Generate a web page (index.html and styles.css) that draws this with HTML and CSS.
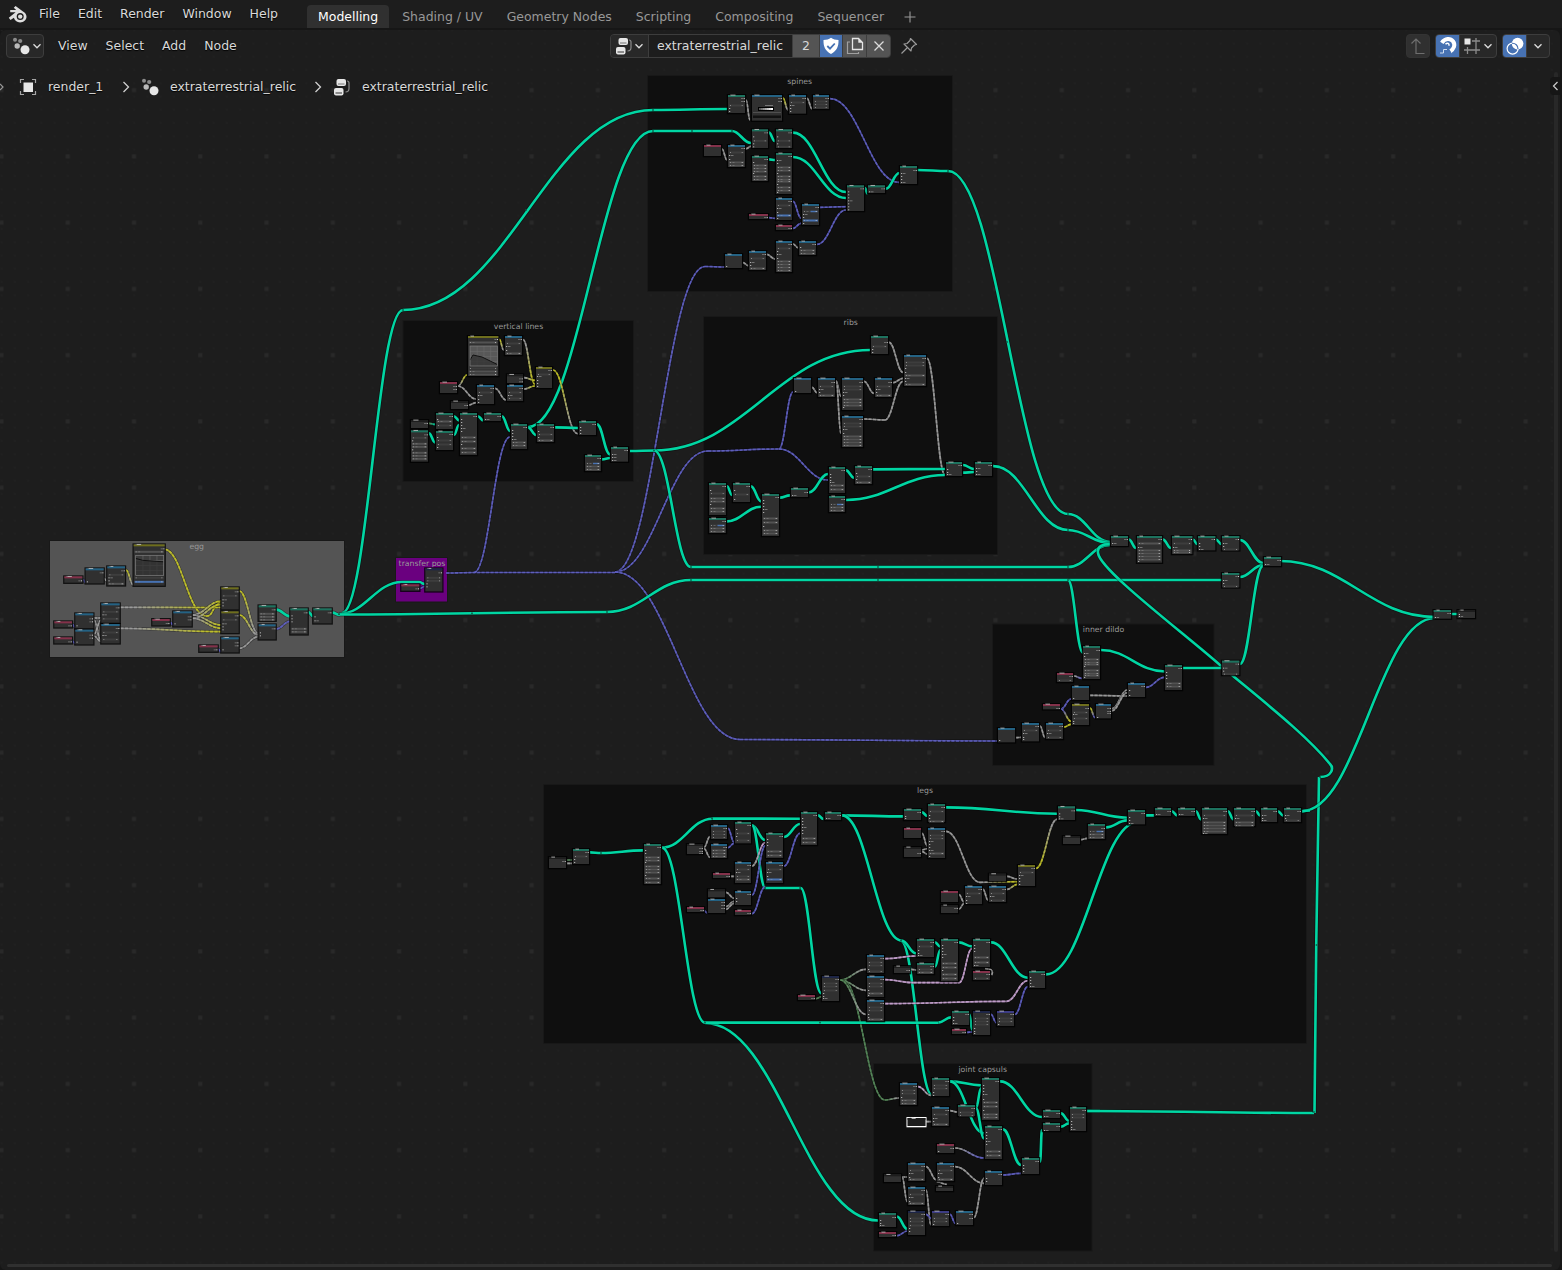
FILE: index.html
```html
<!DOCTYPE html>
<html lang="en">
<head>
<meta charset="utf-8">
<title>Blender</title>
<link rel="stylesheet" href="styles.css">
</head>
<body>
<svg class="sprites" aria-hidden="true">
  <symbol id="i-chevron" viewBox="0 0 10 10"><path d="M1.500 3.200 5 6.800 8.500 3.200" fill="none" stroke="#dcdcdc" stroke-width="1.300"/></symbol>
  <symbol id="i-dots" viewBox="0 0 18 18"><circle cx="3" cy="2.800" r="2" fill="#8c8c8c"/><circle cx="8.200" cy="4" r="2.100" fill="#8c8c8c"/><circle cx="5.200" cy="9" r="2.700" fill="#b9b9b9"/><circle cx="13" cy="12.800" r="4.500" fill="#e6e6e6"/></symbol>
  <symbol id="i-tree" viewBox="0 0 18 18"><rect x="3.500" y="1" width="9.500" height="7" rx="2" fill="#e6e6e6"/><path d="M5 6h6.500" stroke="#777" stroke-width="1"/><rect x="1" y="10" width="9.500" height="7.500" rx="2" fill="#e6e6e6"/><path d="M2.500 15H9" stroke="#333" stroke-width="1"/><path d="M14 3c1.500 0 2 .5 2 2v5.500c0 2.500-1 3.500-3.500 3.500" fill="none" stroke="#8c8c8c" stroke-width="1.200"/></symbol>
</svg>

<header class="topbar">
  <svg class="logo" viewBox="0 0 20 18"><path d="M.8 12.800 7.600 7.300H2.200V4.900h6L5.800 2.700 7.600.900l7.400 5.700c2.200 1.300 3.500 3.100 3.500 5.200 0 3.200-2.900 5.600-6.400 5.600-3.200 0-5.700-1.900-6.200-4.600L2.500 15z" fill="#dedede"/><circle cx="12.200" cy="11.600" r="3.500" fill="#1d1d1d"/><circle cx="12.200" cy="11.600" r="2.200" fill="#dedede"/></svg>
  <nav class="menus"><span>File</span><span>Edit</span><span>Render</span><span>Window</span><span>Help</span></nav>
  <nav class="tabs"><span class="tab active">Modelling</span><span class="tab">Shading / UV</span><span class="tab">Geometry Nodes</span><span class="tab">Scripting</span><span class="tab">Compositing</span><span class="tab">Sequencer</span><svg class="plus" viewBox="0 0 12 12"><path d="M6 .5v11M.5 6h11" stroke="#999" stroke-width="1.100"/></svg></nav>
</header>

<main class="editor">
  <svg class="canvas" id="canvas" viewBox="0 30 1562 1240">
    <defs>
      <pattern id="minor" x="-4.900" y="-2.800" width="13.250" height="13.250" patternUnits="userSpaceOnUse"><rect x="5.600" y="5.600" width="2" height="2" fill="#202020"/></pattern>
      <pattern id="major" x="-31.500" y="-9.100" width="66.270" height="66.250" patternUnits="userSpaceOnUse"><rect x="31" y="31" width="4" height="4" fill="#292929"/></pattern>
    </defs>
    <rect y="30" width="1562" height="1240" fill="url(#minor)"/>
    <rect y="62" width="1562" height="1208" fill="url(#major)"/>
    <g id="frames"></g><g id="links"></g><g id="nodes"></g>
  </svg>

  <div class="toolbar">
    <div class="left">
      <button class="box editor-type"><svg width="18" height="18"><use href="#i-dots"/></svg><svg width="10" height="10"><use href="#i-chevron"/></svg></button>
      <nav class="menus node-menus"><span>View</span><span>Select</span><span>Add</span><span>Node</span></nav>
    </div>
    <div class="datablock">
      <button class="cell browse"><svg width="18" height="18"><use href="#i-tree"/></svg><svg width="10" height="10"><use href="#i-chevron"/></svg></button>
      <span class="cell name">extraterrestrial_relic</span>
      <span class="cell grey users">2</span>
      <span class="cell blue"><svg width="18" height="18" viewBox="0 0 18 18"><path d="M9 .8c2.200 1.700 4.500 2.200 7.500 2.200.2 6.500-1.500 10.500-7.500 14C3 13.500 1.300 9.500 1.500 3 4.500 3 6.800 2.500 9 .8z" fill="#fff"/><path d="m5.300 9 2.700 2.700 4.800-5.200" fill="none" stroke="#4772b3" stroke-width="1.800"/></svg></span>
      <span class="cell grey"><svg width="18" height="18" viewBox="0 0 18 18"><path d="M6.500 1.500h6l4 4v7h-10z" fill="none" stroke="#e6e6e6" stroke-width="1.300"/><path d="M12.300 1.500v4.200h4.200z" fill="#e6e6e6"/><path d="M4 5H1.500v11.500h11V15" fill="none" stroke="#a0a0a0" stroke-width="1.200"/></svg></span>
      <span class="cell grey"><svg width="18" height="18" viewBox="0 0 18 18"><path d="m4.500 4.500 9 9m0-9-9 9" stroke="#dcdcdc" stroke-width="1.300"/></svg></span>
    </div>
    <svg class="pin" viewBox="0 0 18 18"><path d="M10.500 1.500 16.500 7.500 14.500 8 11.500 11 11 14 4 7 7 6.500 10 3.500zM7 11 1.500 16.500" fill="none" stroke="#9a9a9a" stroke-width="1.200" stroke-linejoin="round"/></svg>
    <div class="right">
      <span class="box parent"><svg width="18" height="18" viewBox="0 0 18 18"><path d="M2.500 6.500 7 2l4.500 4.500M7 2v14.500h8.500" fill="none" stroke="#6e6e6e" stroke-width="1.200"/></svg></span>
      <div class="group snap">
        <span class="cell blue"><svg width="20" height="20" viewBox="0 0 20 20"><path d="M3.800 6.800C7 1.800 12.500 2 15 5.200c2.800 3.800.8 7.800-3 10.300" fill="none" stroke="#fff" stroke-width="4"/><path d="m7.500 8.300c2-2 4-.8 3.400 1.500" fill="none" stroke="#fff" stroke-width="1.500"/><path d="m2.600 9 3.400 1.800M10.200 13l2.600 4" stroke="#4772b3" stroke-width="1.400"/><path d="M2 17h3.500v-3.500H9" fill="none" stroke="#cfdcf0" stroke-width="1"/></svg></span>
        <span class="cell target"><svg width="18" height="18" viewBox="0 0 18 18"><path d="M13 1v16M1 13h16M4.500 10v7M9 4h8" stroke="#8c8c8c" stroke-width="1.300"/><rect x="1.500" y="1.500" width="6" height="6" fill="#e6e6e6"/></svg><svg width="10" height="10"><use href="#i-chevron"/></svg></span>
      </div>
      <div class="group overlay">
        <span class="cell blue"><svg width="20" height="20" viewBox="0 0 20 20"><circle cx="12.600" cy="7.600" r="5.800" fill="#fff"/><circle cx="7.600" cy="12.600" r="5.500" fill="none" stroke="#fff" stroke-width="1.200"/><path d="M7 7.300a5.500 5.500 0 0 1 6 5.700" fill="none" stroke="#4772b3" stroke-width="1.200"/></svg></span>
        <span class="cell drop"><svg width="10" height="10"><use href="#i-chevron"/></svg></span>
      </div>
    </div>
  </div>

  <div class="crumbs">
    <svg class="edge" viewBox="0 0 6 18"><path d="m0 6 3 3-3 3" fill="none" stroke="#999" stroke-width="1.200"/></svg>
    <svg class="c-obj" width="18" height="18" viewBox="0 0 18 18"><rect x="4.500" y="4.500" width="9.500" height="9.500" fill="#e6e6e6"/><path d="M1.500 5V1.500H5M13 1.500h3.500V5M16.500 13v3.500H13M5 16.500H1.500V13" fill="none" stroke="#a5a5a5" stroke-width="1.200"/></svg>
    <span class="c1">render_1</span>
    <svg class="sep" viewBox="0 0 8 12"><path d="m1.500 1 5 5-5 5" fill="none" stroke="#d0d0d0" stroke-width="1.300"/></svg>
    <svg class="i2" width="18" height="18"><use href="#i-dots"/></svg>
    <span class="c2">extraterrestrial_relic</span>
    <svg class="sep" viewBox="0 0 8 12"><path d="m1.500 1 5 5-5 5" fill="none" stroke="#d0d0d0" stroke-width="1.300"/></svg>
    <svg class="i3" width="18" height="18"><use href="#i-tree"/></svg>
    <span class="c3">extraterrestrial_relic</span>
  </div>
  <div class="vscroll"></div>
  <div class="side-handle"><svg viewBox="0 0 8 12"><path d="M6.500 2 2.500 6l4 4" fill="none" stroke="#ccc" stroke-width="1.200"/></svg></div>
  <div class="hscroll"></div>
</main>
<script src="graph.js"></script>
</body>
</html>
```
FILE: styles.css
```css
* { box-sizing: border-box; }
body {
  margin: 0;
  width: 1562px;
  height: 1270px;
  overflow: hidden;
  display: flex;
  flex-direction: column;
  background: #161616;
  color: #d9d9d9;
  font: 12.47px/16px "DejaVu Sans", sans-serif;
}
svg { display: block; flex: none; }
.sprites { position: absolute; width: 0; height: 0; }
button { font: inherit; color: inherit; padding: 0; margin: 0; }

.topbar { display: flex; height: 28px; margin-bottom: 2px; background: #1d1d1d; }
.logo { width: 20px; height: 18px; margin: 5px 0 0 8px; }
.menus { display: flex; gap: 18px; white-space: nowrap; text-shadow: 0 1px 1px #000; }
.topbar .menus { margin: 6px 0 0 11px; width: 268px; }
.tabs { display: flex; gap: 2px; padding-top: 5px; white-space: nowrap; }
.tab { height: 23px; padding: 4px 11px; border-radius: 4px 4px 0 0; color: #989898; }
.tab.active { background: #303030; color: #fff; }
.plus { width: 12px; height: 12px; margin: 6px 0 0 7px; }

.editor { position: relative; flex: 1; background: #1d1d1d; border-radius: 6px; margin-right: 2px; }
.canvas { position: absolute; left: 0; top: 0; width: 1562px; height: 1240px; }
.canvas text { font: 7.75px "DejaVu Sans", sans-serif; fill: #989898; text-anchor: middle; }

.toolbar { position: relative; display: flex; align-items: center; height: 24px; margin-top: 4px; }
.left { display: flex; align-items: center; width: 610px; padding-left: 6px; }
.box, .datablock, .group { display: flex; align-items: center; height: 24px; border: 1px solid #3d3d3d; border-radius: 4px; background: #282828; overflow: hidden; }
.editor-type { width: 38px; padding-left: 5px; gap: 2px; }
.node-menus { margin-left: 14px; }
.cell { display: flex; align-items: center; justify-content: center; flex: none; width: 24px; height: 100%; border-left: 1px solid #3d3d3d; }
.cell:first-child { border-left: 0; }
.datablock { width: 281px; }
.browse { width: 37px; gap: 1px; background: #282828; border: 0; }
.name { width: 144px; background: #1d1d1d; justify-content: flex-start; padding-left: 8px; }
.users { width: 27px; }
.grey { background: #545454; }
.blue { background: #4772b3; width: 23px; }
.pin { width: 18px; height: 18px; margin-left: 9px; }
.right { display: flex; margin-left: auto; margin-right: 10px; }
.parent { width: 24px; justify-content: center; background: #303030; border-color: #333; margin-right: 5px; }
.snap { width: 62px; margin-right: 5px; }
.target { width: 37px; gap: 2px; }
.overlay { width: 48px; }
.drop { width: 23px; }

.crumbs { position: relative; display: flex; align-items: center; height: 18px; margin-top: 20px; text-shadow: 0 1px 1px #000; white-space: nowrap; }
.edge { width: 6px; height: 18px; }
.c-obj { margin-left: 13px; }
.c1 { margin-left: 11px; width: 74px; }
.sep { width: 8px; height: 12px; }
.i2 { margin-left: 11px; }
.c2 { margin-left: 11px; width: 144px; }
.i3 { margin-left: 11px; }
.c3 { margin-left: 11px; }

.side-handle { position: absolute; right: 0; top: 47px; width: 10px; height: 18px; background: #161616; border-radius: 4px 0 0 4px; }
.side-handle svg { width: 8px; height: 12px; margin: 3px 0 0 1px; }
.vscroll { position: absolute; right: 2px; top: 42px; width: 4px; height: 1180px; border-radius: 2px; background: #282828; }
.hscroll { position: absolute; left: 7px; bottom: 3px; width: 1545px; height: 3px; border-radius: 2px; background: #303030; }
```
FILE: graph.js
```js
const NS = 'http://www.w3.org/2000/svg';
const HEAD = { g: '#1d725e', b: '#246283', r: '#83314a', y: '#6e6e1d', n: '#1d1d1d', v: '#1d2546', p: '#3c3c83' };
const WIRE = { g: '#00d6a3', v: '#6363c7', s: '#a1a1a1', y: '#c7c729', k: '#cca6d6', e: '#598c5c' };
const layer = id => document.getElementById(id);

function add(parent, tag, attrs, text) {
  const el = document.createElementNS(NS, tag);
  for (const k in attrs) el.setAttribute(k, attrs[k]);
  if (text) el.textContent = text;
  parent.appendChild(el);
  return el;
}

// title, x1, y1, x2, y2, fill, label centre, label baseline
[
  ['spines', 648, 76, 952, 291, '#0f0f0f', 799.7, 84],
  ['vertical lines', 403.500, 321, 633, 481, '#0f0f0f', 518.500, 328.700],
  ['ribs', 704, 317, 997, 554, '#0f0f0f', 850.700, 325],
  ['egg', 50, 541, 344, 657, '#545454', 196.700, 549],
  ['transfer pos', 396, 558, 447, 601.500, '#6a007f', 422, 566],
  ['inner dildo', 993, 624.500, 1213.500, 765, '#0f0f0f', 1103.500, 632],
  ['legs', 544, 785, 1306, 1043, '#0f0f0f', 925, 793],
  ['joint capsuls', 874, 1064, 1091.500, 1250.500, '#0f0f0f', 982.700, 1072]
].forEach(([t, x, y, x2, y2, fill, lx, ly]) => {
  add(layer('frames'), 'rect', { x: x - 1, y: y - 1, width: x2 - x + 2, height: y2 - y + 2, fill: '#181818', rx: 1 });
  add(layer('frames'), 'rect', { x, y, width: x2 - x, height: y2 - y, fill });
  add(layer('frames'), 'text', { x: lx, y: ly }, t);
});

// Detail tokens: o output, i input, l input with label, f dim field, b value field, u active field, h half-active field
function node(ox, oy, row) {
  const [a, b, c, d, head, detail = ''] = row;
  const x = ox + a / 3, y = oy + b / 3, w = (c - a) / 3, h = (d - b) / 3;
  const g = add(layer('nodes'), 'g', {});
  const box = (bx, by, bw, bh, fill, o = 1) => add(g, 'rect', { x: bx, y: by, width: bw, height: bh, fill, opacity: o });
  box(x - 1.200, y - 1, w + 2.400, h + 2.300, '#000', .8);
  box(x, y, w, h, '#303030');
  box(x, y, w, 2, HEAD[head]);
  const t = (a * 7 + b) % 4;
  box(x + 3, y - .4, 3 + t * .5, 1, '#c8c8c8', .8);
  box(x + 2, y - .4, 1, 1, '#777');
  detail.split(' ').filter(Boolean).forEach(tok => {
    const k = tok[0], ty = y + Number(tok.slice(1));
    if (k === 'o') { box(x + w - 1.300, ty, 1, 1, '#d0d0d0'); box(x + w - 4, ty, 2.300, 1, '#6c6c6c'); }
    if (k === 'i' || k === 'l') box(x + 1.200, ty, 1, 1, '#d0d0d0');
    if (k === 'l') box(x + 3, ty, 2.500, 1, '#747474');
    if ('fbuh'.includes(k)) {
      box(x + 1, ty - .5, w - 2, 2, { f: '#3d3d3d', b: '#525252', u: '#4772b3', h: '#3a3a3a' }[k]);
      if (k === 'h') box(x + w / 2, ty - .2, w / 2 - 1.500, 1.400, '#4772b3');
      box(x + 2, ty, 1, 1, '#aaa', .7);
      if (k !== 'f') box(x + 4.500, ty, 2, 1, '#aaa', .35);
      box(x + w - 3.300, ty, 1, 1, '#c4c4c4', k === 'f' ? .6 : .9);
    }
    if (k === 'w') { g.firstChild.setAttribute('fill', '#fff'); g.firstChild.setAttribute('opacity', 1); box(x, y, w, h, '#1d1d1d'); box(x + 4, y, 4, 1, '#aaa'); }
    if (k === 'R') {
      box(x + 13, ty - 1, 8, 1, '#777'); box(x + 6, ty + 1, 16, 4, '#000');
      for (let n = 0; n < 7; n++) box(x + 7 + n * 2, ty + 2, 2, 2, `rgb(${90 + n * 27},${90 + n * 27},${90 + n * 27})`);
      box(x + 1, ty + 6, w - 2, 1, '#999', .3); box(x + 1, ty + 9.500, w - 2, 2.500, '#111');
    }
    if (k === 'C' || k === 'D') {
      const gx = x + 2, gw = w - 3, gh = 20;
      box(gx, ty, gw, gh, k === 'C' ? '#585858' : '#3d3d3d');
      for (let n = 1; n < 4; n++) { box(gx + n * gw / 4, ty, .6, gh, '#6a6a6a'); box(gx, ty + n * gh / 4, gw, .6, '#6a6a6a'); }
      const line = k === 'C' ? `M${gx} ${ty + 14} L${gx + 3} ${ty + 9} L${gx + 12} ${ty + 11} L${gx + gw} ${ty + 18.500}` : `M${gx} ${ty + 3} L${gx + 7} ${ty + 5} L${gx + gw} ${ty + 6.500}`;
      add(g, 'path', { d: `${line} V${ty + gh} H${gx} Z`, fill: '#303030', opacity: .75 });
      add(g, 'path', { d: line, fill: 'none', stroke: '#111', 'stroke-width': 1 });
      add(g, 'rect', { x: gx, y: ty, width: gw, height: gh, fill: 'none', stroke: '#808080', 'stroke-width': .7 });
    }
  });
}

let gradientCount = 0;
function wire(kind, x1, y1, x2, y2, d) {
  const from = WIRE[kind[0]], to = WIRE[kind[1] || kind[0]];
  let stroke = from;
  if (from !== to) {
    const id = 'wire' + gradientCount++;
    const lg = add(layer('links'), 'linearGradient', { id, gradientUnits: 'userSpaceOnUse', x1, y1, x2, y2 });
    add(lg, 'stop', { offset: .15, 'stop-color': from });
    add(lg, 'stop', { offset: .85, 'stop-color': to });
    stroke = `url(#${id})`;
  }
  const k = Math.max(Math.abs(x2 - x1) * .42, 1);
  const path = d || `M${x1} ${y1}C${x1 + k} ${y1} ${x2 - k} ${y2} ${x2} ${y2 + .01}`;
  const solid = kind[0] === 'g';
  const L = layer('links');
  add(L, 'path', { d: path, fill: 'none', stroke: '#000', 'stroke-width': solid ? 4.200 : 3, opacity: .35 });
  add(L, 'path', { d: path, fill: 'none', stroke, 'stroke-width': solid ? 2.600 : 1.700, opacity: solid ? 1 : .7 });
  if (!solid) add(L, 'path', { d: path, fill: 'none', stroke, 'stroke-width': 1.600, 'stroke-dasharray': '3 1.500', opacity: .8 });
}

// Links that run between frames
[
  ['v', 446, 573, 477, 572.500], ['v', 477, 572.500, 615, 572.500], ['v', 474, 572.500, 510, 437],
  ['v', 615, 572, 705, 266.500], ['v', 705, 266.500, 725, 267], ['v', 615, 572, 708, 451],
  ['v', 708, 451, 779, 449], ['v', 779, 449, 793, 392], ['v', 779, 449, 828, 480],
  ['v', 615, 572, 740, 739.500], ['v', 740, 739.500, 997, 741],
  ['e', 843, 980, 885, 1100], ['es', 885, 1100, 899, 1098],
  ['g', 342, 613, 403, 310], ['g', 403, 310, 653, 110], ['g', 653, 110, 727, 109],
  ['g', 528, 427, 653, 131], ['g', 653, 131, 732, 131], ['g', 732, 131, 751, 143],
  ['g', 630, 451, 656, 450.500], ['g', 654, 450.500, 870, 350], ['g', 654, 450.500, 691, 567],
  ['g', 691, 567, 1068, 567], ['g', 1068, 567, 1110, 545],
  ['g', 339, 614, 402, 582], ['g', 402, 582, 419, 582], ['g', 419, 582, 425, 584],
  ['g', 339, 614.500, 607, 612], ['g', 607, 612, 691, 580], ['g', 691, 580, 1222, 580], ['g', 1068, 580, 1083, 653],
  ['g', 917, 170, 948, 171], ['g', 948, 171, 1068, 514], ['g', 1068, 514, 1110, 542],
  ['g', 993, 466, 1068, 530], ['g', 1068, 530, 1110, 543],
  ['g', 0, 0, 0, 0, 'M1320 777C1332 777 1334 768 1330 764C1305 733 1255 695 1220 665C1180 630 1100 570 1098 553C1097 546 1103 544 1110 544'],
  ['g', 1087, 1111, 1314, 1113], ['g', 1315, 1113, 1320, 777, 'M1314.500 1113C1315 1050 1317 850 1319 777'],
  ['g', 1302, 811, 1435, 618], ['g', 1280, 561, 1435, 617], ['g', 1240, 540, 1263, 563],
  ['g', 1240, 577, 1263, 565], ['g', 1240, 664, 1263, 566], ['g', 1183, 668, 1222, 668],
  ['g', 1451, 614, 1458, 614], ['g', 1101, 650, 1165, 671.500],
  ['g', 705, 1023, 878, 1220.500], ['g', 901, 941, 932, 1095]
].forEach(l => wire(...l));

// Reroute points along the links
[[403, 310], [526, 210], [653, 110], [653, 131], [732, 131], [692, 131], [654, 450.500], [691, 567], [691, 580], [878, 567], [878, 580],
 [1068, 514], [1068, 530], [1068, 567], [1068, 580], [1007, 342], [948, 171], [607, 612], [472, 613.300], [339, 614.300], [1320, 777],
 [1316.500, 945], [1314, 1112], [705, 1022.600], [901, 940.600], [712, 818.600], [765, 888], [800, 888], [820, 1022.600], [601, 853]]
  .forEach(([x, y]) => add(layer('nodes'), 'rect', { x: x - .8, y: y - .8, width: 1.600, height: 1.600, fill: '#0b5c48' }));

// Each group: origin, nodes, links; inner coordinates are thirds of a pixel
const groups = [
  { o: [640, 70], n: [
    [264,75,315,129,'g','o3 o6 f10 i13 i16'], [336,75,426,152,'b','o3 o6 R11'], [447,75,498,131,'b','o3 f7 l10 i13 i16'],
    [519,75,567,117,'b','o3 f6 f9 f12'], [336,178,384,234,'g','o3 i7 f11 i14 i17'], [408,178,456,234,'g','o3 i7 f11 i14 f17'],
    [192,225,243,258,'r'], [264,225,315,291,'b','o3 f7 l10 i14 b17 b20'], [336,258,384,333,'g','o3 i6 b9 b12 b15 i17 b20 b23'],
    [408,249,456,372,'g','o3 l7 i10 b14 b17 i20 b23 b26 b28 i31 b34 b37 i39'], [408,384,456,450,'b','o3 f7 l10 i14 u17 i20'],
    [486,402,537,465,'b','o3 h7 l10 i13 u16 i19'], [327,432,384,447,'r','o3'], [408,465,456,480,'r','o3'],
    [408,513,456,606,'b','o3 f7 i10 l13 i17 b20 b23 b26 b29'], [477,513,528,555,'b','o3 i6 b9 b12'], [255,552,306,594,'b','i12'],
    [327,543,378,600,'b','o3 f7 l11 i14 b17'], [621,346,672,423,'g','o3 i6 i9 i12 l15 i18 i21 i24'], [684,346,735,369,'g','o3 l6'], [780,288,831,342,'g','o4 l7 i10 i13 l16'] ],
    l: [['s',318,90,330,150],['ys',429,84,444,120],['s',501,85,516,116],['v',570,86,777,337],['g',387,188,404,213],['s',246,237,261,270],['s',318,236,333,229],['g',387,268,405,270],['g',459,188,618,366],['g',459,261,618,384],['v',387,443,406,445],['v',459,394,483,444],['v',459,475,483,460],['v',540,412,618,410],['v',531,523,618,420],['s',309,578,325,587],['s',380,553,405,567],['s',459,522,474,533],['g',675,354,682,370],['g',738,356,778,309]] },
  { o: [395, 315], n: [
    [219,63,310,183,'y','o3 b6 C10 f32 b35 b38'], [330,63,381,120,'b','o3 f7 l10 i14 b17'], [135,201,186,234,'r','o4 o7'], [168,258,219,282,'n','o4'],
    [246,210,297,267,'b','o3 f7 l10 i14 i17'], [336,178,384,204,'n','o4 o7'], [336,210,384,258,'b','o3 f7 l10 f13'], [423,156,471,219,'y','o3 f7 l9 i13 i16 i19'],
    [48,315,99,339,'n','o3'], [48,346,99,440,'g','o4 f7 i10 b13 b16 i19 b22 b25 b28'], [123,294,174,342,'g','o3 i6 b8 f12'], [123,348,174,405,'g','o3 i6 f9 f13 i16'],
    [195,294,246,420,'g','o3 i6 i9 i12 l15 i18 b24 b28 i31 b35 b39'], [267,294,318,318,'g','o3 l6'], [348,327,396,402,'g','o3 i6 i9 i12 b18 b21 l15'], [426,327,477,381,'g','o3 i7 f10 i13 b16'],
    [552,318,603,360,'g','o3 i6 i9 i12'], [648,396,699,440,'g','o3 l7 l10 l13'], [570,420,618,468,'g','o3 h8 b11 b14'] ],
    l: [['ys',313,73,326,105],['sy',189,213,216,180],['s',189,213,243,252],['s',222,270,243,263],['s',300,220,333,255],['sy',384,74,420,208],['sy',387,188,420,196],['sy',387,222,420,213],['ys',474,165,548,356],['eg',102,325,120,328],['g',102,355,120,382],['g',177,304,192,316],['g',177,360,192,330],['g',249,304,265,316],['g',321,304,345,348],['g',399,337,423,360],['g',480,337,549,339],['g',606,328,645,418],['g',621,433,645,429]] },
  { o: [700, 315], n: [
    [513,63,564,117,'g','o6 f10 i13 i16'], [612,120,678,213,'b','o3 f7 f10 i13 i17 b20 l23 i26 b29'], [282,189,333,234,'b','i13'], [354,189,405,246,'b','o4 f8 l11 i14 b17'],
    [426,189,489,285,'b','o4 f8 f11 l14 i17 b21 b24 b27 i29'], [525,189,576,246,'b','o4 f8 l11 i14 b17'], [426,303,489,396,'b','o3 f7 f10 l13 i17 b20 b23 b26 b29'],
    [27,504,78,600,'g','o3 i7 f10 b15 b18 i21 b25 b28'], [99,504,150,561,'g','o3 i7 f11 i16'], [27,609,78,654,'g','o3 h7 b10 b13'], [186,537,237,663,'g','o3 i6 i9 i12 l15 i18 b24 b28 i32 b36 b39'],
    [273,519,324,546,'g','o4 l7'], [387,456,435,534,'g','o3 i7 i10 i13 b18 b22 l15'], [465,453,516,507,'g','o3 i7 f10 i13 b16'], [387,543,435,591,'g','o3 h8 b11 b14'], [738,441,786,483,'g','o3 i7 i10 l12'], [825,441,876,483,'g','o3 l6 i9 l12'] ],
    l: [['s',567,82,609,172],['s',336,217,351,233],['s',408,198,423,244],['s',408,198,423,355],['s',492,199,522,235],['s',579,203,609,190],['s',492,312,555,315],['s',555,315,609,199],['s',681,130,735,480],['g',81,514,96,540],['g',153,514,183,559],['g',81,619,183,575],['g',240,548,270,541],['g',327,532,384,477],['g',438,466,462,488],['g',519,463,735,462],['g',438,555,735,480],['g',789,450,822,462],['g',789,473,822,471],['g',879,453,900,456]] },
  { o: [40, 535], n: [
    [73,124,127,143,'r','o4'], [137,100,191,145,'b','i13 o4'], [202,94,255,151,'b','o4 f8 l11 i14 b17'], [281,28,374,152,'y','o4 b7 D11 f33 u37'],
    [43,259,96,277,'r','o4'], [106,235,160,280,'b','o5 o8 i12'], [106,284,160,328,'b','o5 o8 i12'], [43,307,96,325,'r','o4'], [184,205,239,263,'b','o4 f8 l11 f15'], [184,267,239,325,'b','o4 f8 l11 f15'],
    [337,252,389,271,'r','o4'], [400,229,455,274,'b','o5 o8 i12'], [544,157,596,223,'y','o4 f8 l12 i15 i18'], [544,229,596,294,'y','o4 f8 l12 i15 i18'], [478,331,533,350,'r','o4'], [544,307,596,352,'b','o5 o8 i12'],
    [656,211,707,257,'g','o4 b8 b11 b14'], [656,268,707,313,'b','o4 i8 i11'], [751,220,803,298,'g','o4 i7 i10 i13 b20 b23'], [820,220,875,265,'g','o4 i8 l12'],
    [1084,148,1138,167,'r','o4'], [1156,100,1207,169,'v','o4 f9 f12 i15 i18'] ],
    l: [['v',130,134,136,142],['s',192,130,200,138],['ys',258,105,280,150],['y',376,43,540,280,'M165.300 549.300C182 552 188 615 206 616C214 617 212 604 221 602'],['v',97,268,106,278],['v',97,318,106,325],['s',162,249,183,249],['s',162,255,183,318],['s',162,297,183,255],['s',162,303,183,320],['sy',241,217,543,217.500],['sy',241,280,543,290],['v',391,263,400,270],['sy',458,240,543,198],['sy',458,240,543,270],['sy',458,250,543,208],['sy',458,250,543,280],['ys',598,168,655,296],['ys',598,240,655,300],['s',598,340,655,305],['v',534,342,543,350],['g',709,224,750,244],['v',709,282,750,259],['g',805,231,820,244],['g',877,233,900,240],['v',1140,160,1155,154]] },
  { o: [985, 500], n: [
    [378,108,429,138,'g','o3 l7'], [456,108,531,188,'g','o3 b7 l11 b14 b17 b20 b23 i25'], [561,108,622,162,'g','o3 f7 l11 b14 b16'], [639,108,691,151,'g','o3 i7 i10 l13'], [711,108,763,151,'g','o3 l7 i10 f13'],
    [837,171,888,198,'g','o3 l7'], [711,219,763,262,'g','o3 l7 i10 f13'], [1346,330,1398,356,'g','o3 l7'], [1418,330,1470,354,'n','i4 l6'],
    [294,438,345,537,'g','o4 l7 i10 b13 b16 b18 i20 b24 b27 b29 i31'], [216,519,264,546,'r','o3 f7'], [540,495,591,570,'g','o3 i7 i10 i13 b18 b21'], [261,558,312,600,'b','i12'], [174,612,225,628,'r','o4'],
    [261,612,312,675,'y','o4 f8 l10 f14 i17 i19'], [333,612,378,655,'b','o4 o7 o9 i13'], [429,549,480,591,'b','o3 i7 i12'], [39,684,90,727,'b','i12'], [111,669,162,724,'b','o3 f7 l10 i14 i16'], [183,669,234,717,'b','o3 f7 l10 f14'], [711,482,763,525,'g','o3 l7 i10 f13'] ],
    l: [['g',432,119,453,144],['g',534,119,558,144],['g',624,119,637,132],['g',693,119,709,132],['sv',267,528,291,535],['s',315,586,427,588],['v',228,627,258,597],['vy',228,627,258,664],['s',93,713,108,712],['s',165,678,180,712],['y',237,681,258,673],['yv',315,624,330,653],['s',381,626,427,570],['s',381,632,427,578],['v',483,562,538,532]] },
  { o: [540, 780], n: [
    [27,231,78,264,'n','o4'], [99,207,147,252,'g','o3 f7 i10 i13'], [312,192,363,312,'g','o3 i6 i9 b13 b16 i18 b22 b25 b28 i31 b34 b38'],
    [441,192,489,222,'n','o4 o7 o9'], [513,135,561,177,'b','o3 f6 f9 f12'], [513,192,561,234,'b','o3 b6 b9 b12'], [585,126,633,190,'g','o3 i7 f11 i14 f18'], [678,159,729,234,'g','o3 i6 i9 i12 b18 b22'],
    [783,96,831,195,'g','o3 i6 i9 i12 l15 i18 i21 b26 b30'], [855,96,903,120,'g','o3 l6'], [585,246,633,309,'b','o3 f7 l10 f14 b17'], [678,246,729,309,'b','o3 f7 l10 i14 u17'], [519,279,570,294,'r','o3'],
    [504,328,555,352,'n'], [504,357,555,399,'b','o3 o6 o9'], [441,381,492,396,'r','o3'], [585,333,633,375,'b','o3 i7 i10'], [585,390,633,405,'r','o3'], [774,645,825,660,'r','o3'], [846,588,897,663,'v','o3 f7 f10 f14 i17 i20 l22'] ],
    l: [['e',81,240,96,240],['s',81,250,96,250],['g',150,217,183,219],['g',183,219,309,211],['g',366,203,517,116],['g',517,116,780,116],['g',366,203,495,728],['g',495,728,1195,728],
      ['s',492,202,510,170],['s',492,206,510,232],['v',564,145,582,186],['v',564,203,582,190],['g',636,136,675,180],['g',636,136,676,324],['g',676,324,782,324],['g',782,324,844,640],['s',573,289,584,289],['sk',636,258,676,188],['v',636,345,676,197],['v',636,401,676,320],['s',558,337,582,355],['s',558,380,582,364],['s',558,388,582,370],['v',492,392,503,400],['g',732,171,780,132],['v',732,258,780,160],['g',834,106,850,117],['g',906,106,1090,109],['g',906,106,1085,482],['e',828,656,844,650],
      ['es',900,600,978,568],['es',900,600,978,631],['es',900,600,978,703],['g',1085,482,1128,520]] },
  { o: [860, 780], n: [
    [132,87,183,120,'g','o3 i7 i9'], [204,72,255,126,'g','o3 f7 i11 i14 b17'], [132,144,183,174,'r'], [132,201,183,231,'n','o6'], [204,144,255,234,'b','o3 f7 f10 l13 i16 i19 l22 b25 i28'],
    [243,333,294,366,'r'], [243,375,294,399,'n','o3'], [315,318,366,372,'b','o3 f7 l10 i14 i17'], [387,318,438,366,'b','o3 f7 l10 f14'], [387,281,438,303,'n'], [474,255,525,318,'y','o3 f7 l10 i13 i16 i19'],
    [594,79,645,120,'g','o4 i7 i10 l12'], [684,132,735,177,'g','o4 h7 b10 b13'], [609,168,660,192,'n'], [804,90,855,133,'g','o3 i7 i10 l13'], [885,84,933,108,'g','o3 l6'], [954,84,1005,108,'g','o3 l6'],
    [1026,84,1101,162,'g','o3 f7 l10 b14 b17 b20 b23 l25'], [1122,84,1185,138,'g','o3 f7 l10 b14 b17'], [1203,84,1251,126,'g','o3 l7 i10 l12'], [1272,84,1323,126,'g','o3 l7 i10 f12'],
    [21,525,72,579,'b','o3 f7 f10 i14 f16'], [21,588,72,651,'b','o3 f7 f10 i14 b17 i19'], [21,660,72,723,'b','o3 f7 f10 i14 i17 b19'], [102,558,150,579,'n','o4'], [171,477,222,531,'g','o3 f7 i11 i14 l16'], [171,549,222,582,'g','o3 f6 b9'],
    [243,477,294,603,'g','o3 i6 i9 i12 l15 i18 b24 b28 i31 b35 b39'], [339,477,390,561,'g','o3 i6 i9 i12 b18 b23 l26'], [339,573,390,600,'r','o3 f7'], [507,573,555,624,'g','o3 i6 i9 i12 l15'],
    [276,693,327,735,'g','o3 i6 i9 l12'], [276,747,318,762,'r','o3'], [339,693,390,765,'v','o3 f7 f10 f13 i17 i20 i22'], [411,693,462,738,'p','o3 f7 f10 i13'] ],
    l: [['g',186,97,202,108],['g',258,82,591,101],['s',186,160,202,198],['s',186,210,202,206],['s',186,215,202,222],['s',258,154,360,307],['sy',360,307,472,305],['s',297,344,312,366],['s',297,387,312,371],['s',369,328,384,360],['sy',441,328,472,313],['s',441,289,472,297],['ys',528,265,591,118],['g',648,90,801,113],['s',663,179,682,175],['g',738,142,801,121],['g',858,106,884,106],['g',558,583,835,125],['g',936,94,951,106],['g',1008,94,1023,118],['g',1104,94,1120,118],['g',1188,94,1201,107],['g',1254,94,1270,107],['g',1326,94,1350,91],
      ['k',75,536,170,528],['s',153,568,170,570],['g',225,487,241,500],['g',225,560,241,510],['k',75,599,160,608],['k',160,608,298,608],['k',298,608,336,506],['k',75,671,440,664],['k',440,664,503,602],['g',297,487,336,499],['g',393,487,503,593],['s',375,566,398,586,'M985 968.500C991 968.500 994 971 991.500 975'],['g',235,728,273,712],['g',328,703,337,750],['v',321,757,337,756],['v',393,703,409,728],['v',465,703,503,620]] },
  { o: [865, 1055], n: [
    [105,84,156,150,'b','o3 f7 f10 i14 b17 b20'], [201,69,252,123,'g','o3 f7 f10 i14 i17'], [128,189,181,213,'n','w0'], [201,156,252,213,'b','o3 f7 l11 i14 b17'], [279,150,330,183,'g','o3 f7 f10'],
    [351,69,402,195,'g','o3 i7 i10 i13 l16 i21 b24 b28 i32 b36 b39'], [360,213,411,312,'g','o3 i6 i9 i12 l15 i18 b25 b29'], [216,267,267,294,'r','o4 i7'], [534,165,585,189,'g','o3 l6'], [534,204,585,228,'g','o3 l7'], [615,156,663,228,'g','o3 f7 f10 i14 i17 i20 l22'],
    [57,358,108,381,'n'], [129,324,180,378,'b','o3 f7 l10 i14 b16'], [216,324,267,378,'b','o3 f7 l10 i14 b16'], [213,393,264,408,'n'], [129,396,180,450,'b','o3 f7 l10 i14 b16'], [360,348,411,390,'b','o3 i7 i10'], [471,309,522,357,'g','o3 i7 i10 i13'],
    [42,474,93,516,'g','o4 i7 i10 l12'], [42,531,93,546,'r','o3'], [129,468,180,540,'v','o3 f7 f10 f14 i17 i20'], [201,468,252,513,'p','o3 f7 f10 i13'], [273,468,324,510,'b','o3 o7 i12'] ],
    l: [['ks',159,95,198,121],['s',184,200,199,200],['s',255,167,277,171],['g',255,79,348,91],['g',255,79,357,235],['g',333,160,348,100],['g',333,160,357,250],['g',405,79,531,186],['sv',270,279,357,309],['g',414,223,468,330],['g',525,320,531,225],['g',588,175,612,198],['g',588,215,612,205],['g',666,168,705,168],['v',414,360,468,355],['s',111,366,127,366],['s',111,366,127,440],['s',183,335,215,375],['s',183,405,198,510],['s',270,335,357,385],['s',215,380,245,388],['s',327,487,357,370],['v',255,478,271,505],['v',183,478,199,490],['g',96,485,127,522],['v',96,542,127,528]] }
];

groups.forEach(({ o: [ox, oy], n, l }) => {
  l.forEach(([k, x1, y1, x2, y2, d]) => wire(k, ox + x1 / 3, oy + y1 / 3, ox + x2 / 3, oy + y2 / 3, d));
  n.forEach(row => node(ox, oy, row));
});
```
